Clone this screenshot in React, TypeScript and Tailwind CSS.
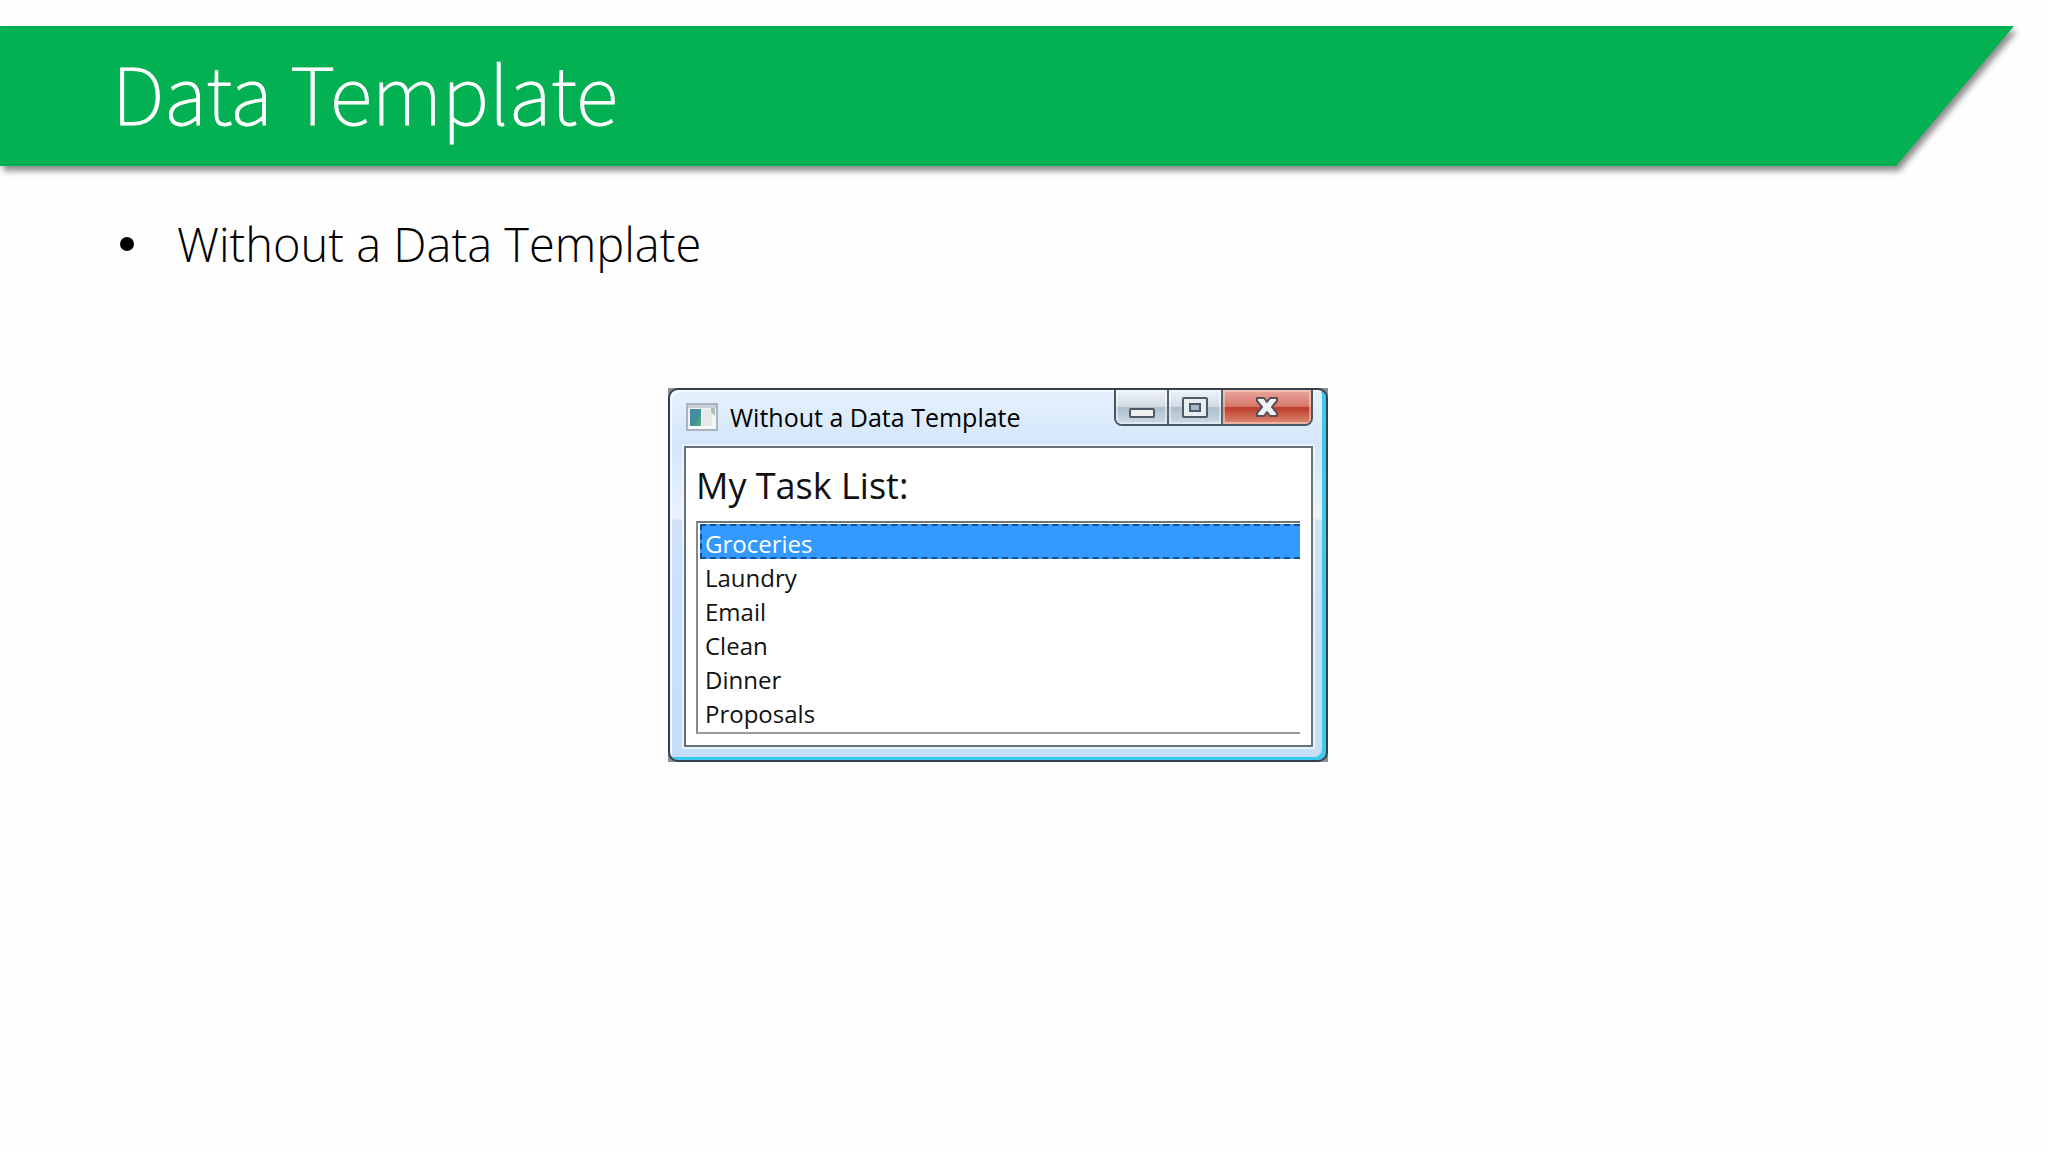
import React, { useState } from 'react';

const tasks = ['Groceries', 'Laundry', 'Email', 'Clean', 'Dinner', 'Proposals'];

function AppIcon() {
  return (
    <svg className="w-8 h-7 shrink-0" viewBox="0 0 32 28" aria-hidden="true">
      <defs>
        <linearGradient id="pane" x1="0" y1="0" x2="1" y2="1">
          <stop offset="0" stopColor="#4f86b4" />
          <stop offset="0.5" stopColor="#3f8f9c" />
          <stop offset="1" stopColor="#56b070" />
        </linearGradient>
      </defs>
      <rect x="1" y="1" width="30" height="26" fill="#f3f6f6" stroke="#a9b3c0" strokeWidth="2" />
      <rect x="2" y="2" width="28" height="3" fill="#c9d0d8" />
      <rect x="4" y="6" width="11" height="17" fill="url(#pane)" />
      <rect x="16" y="6" width="10" height="17" fill="#e6e9ea" />
      <path d="M25 5h4v8l-4-4z" fill="#a9bdb8" />
      <rect x="3" y="23" width="26" height="2" fill="#ffffff" />
    </svg>
  );
}

function CaptionButtons() {
  const grey =
    'flex justify-center h-full border-r-2 border-[#566270] bg-[linear-gradient(#eef3f8_0%,#d3dde6_48%,#afbecb_52%,#cbdae6_100%)] shadow-[inset_0_0_0_2px_rgba(255,255,255,0.45)]';
  return (
    <div className="flex h-9 w-[199px] overflow-hidden rounded-b-lg border-x-2 border-b-2 border-[#4a5562]">
      <button type="button" aria-label="Minimize" className={`${grey} w-[53px]`}>
        <svg className="w-[26px] h-[34px]" viewBox="0 0 26 34">
          <rect x="1" y="19" width="24" height="8" rx="1" fill="#f0f0f0" stroke="#4f5866" strokeWidth="2" />
        </svg>
      </button>
      <button type="button" aria-label="Maximize" className={`${grey} w-[54px]`}>
        <svg className="w-[26px] h-[34px]" viewBox="0 0 26 34">
          <rect x="1" y="8" width="24" height="19" rx="1" fill="#e8edf1" stroke="#4f5866" strokeWidth="2" />
          <rect x="8" y="14" width="10" height="7" fill="#a9b8c8" stroke="#4f5866" strokeWidth="2" />
        </svg>
      </button>
      <button
        type="button"
        aria-label="Close"
        className="flex justify-center flex-1 h-full bg-[linear-gradient(#e9a79d_0%,#d7786b_48%,#bd3a29_52%,#d06a55_80%,#dd8d7a_100%)] shadow-[inset_0_0_0_2px_rgba(255,220,210,0.5)]"
      >
        <svg className="w-6 h-[34px]" viewBox="0 0 24 34">
          <path
            d="M2 8h7l3 4 3-4h7v3l-5 6 5 6v3h-7l-3-4-3 4H2v-3l5-6-5-6z"
            fill="#f1f2f4"
            stroke="#58505c"
            strokeWidth="2"
            strokeLinejoin="round"
          />
        </svg>
      </button>
    </div>
  );
}

function TaskList() {
  const [selected, setSelected] = useState('Groceries');

  return (
    <div
      role="radiogroup"
      aria-labelledby="task-heading"
      className="border-y-2 border-l-2 border-t-[#6f757c] border-l-[#858a91] border-b-[#9a9b9f] pt-px pl-0.5 pb-[3px]"
    >
      {tasks.map((task) => (
        <label
          key={task}
          className={`flex items-center h-[34px] first:h-[35px] pt-1 pl-[3px] border-y-2 border-l-2 border-dashed text-[24px] leading-none ${
            selected === task ? 'bg-[#3399ff] border-[#12508f] text-white' : 'border-transparent text-[#111]'
          }`}
        >
          <input
            type="radio"
            name="task"
            className="sr-only"
            checked={selected === task}
            onChange={() => setSelected(task)}
          />
          {task}
        </label>
      ))}
    </div>
  );
}

function TaskWindow() {
  return (
    <section className="w-[660px] bg-[#8b8f94]">
      <div className="rounded-[10px] border-2 border-[#36414d] bg-[linear-gradient(#e6f1fc_0px,#d3e6fb_55px,#eaf3fd_128px,#cfe2f8_131px,#c4defa_100%)] shadow-[inset_-4px_-3px_0_#3acbea,inset_2px_2px_0_#f4faff] pl-3.5 pr-[13px] pb-[13px]">
        {/* Title bar */}
        <header className="flex items-start justify-between h-14">
          <div className="flex items-center gap-3 pt-[11px] pl-0.5">
            <AppIcon />
            <h2 className="text-[25px] leading-8 text-black">Without a Data Template</h2>
          </div>
          <CaptionButtons />
        </header>

        {/* Client area */}
        <div className="border-2 border-[#66707e] bg-white shadow-[0_0_0_2px_rgba(240,248,255,0.8)] pt-3.5 pl-2.5 pr-[11px] pb-[11px]">
          <p id="task-heading" className="mb-[11px] text-[36px] leading-[48px] text-[#111]">
            My Task List:
          </p>
          <TaskList />
        </div>
      </div>
    </section>
  );
}

export default function App() {
  return (
    <main className="min-h-screen bg-[#fefefe] font-['Open_Sans','Liberation_Sans',sans-serif]">
      {/* Banner */}
      <div className="pt-[26px] pr-[34px] drop-shadow-[3px_5px_3px_rgba(0,0,0,0.45)]">
        <div className="flex items-center h-[140px] pb-3 pl-28 bg-[#03b152] [clip-path:polygon(0_0,100%_0,calc(100%-118px)_100%,0_100%)]">
          <h1 className="font-['Noto_Sans_CJK_SC','Open_Sans',sans-serif] font-thin text-[79px] leading-none text-white [-webkit-text-stroke:1px_white]">
            Data Template
          </h1>
        </div>
      </div>

      <ul className="pt-[46px] pl-[120px]">
        <li className="flex items-center gap-[43px] h-16 text-[47px] leading-none font-light text-black">
          <span className="size-3.5 rounded-full bg-black" />
          Without a Data Template
        </li>
      </ul>

      <div className="flex justify-center pt-28 pr-[52px]">
        <TaskWindow />
      </div>
    </main>
  );
}
